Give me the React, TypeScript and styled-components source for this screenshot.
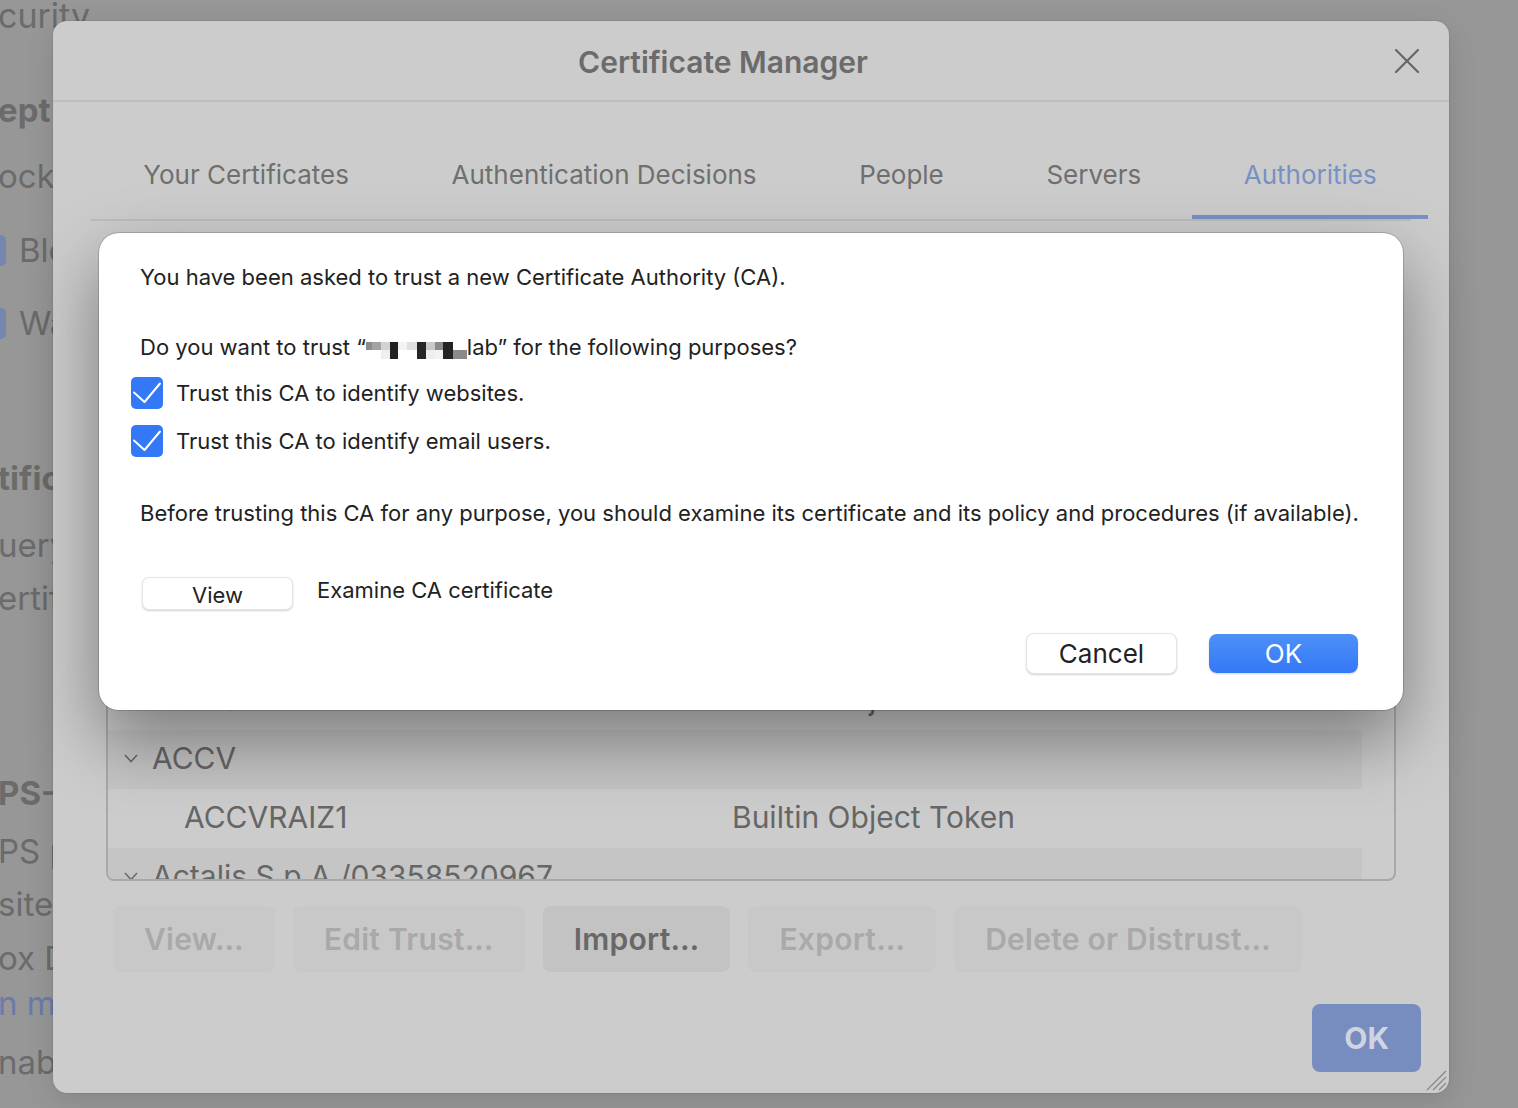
import React from "react";
import styled, { createGlobalStyle } from "styled-components";

const GlobalStyle = createGlobalStyle`
  html, body {
    margin: 0;
    padding: 0;
  }
  body {
    background: #979797;
    overflow: hidden;
    font-family: Inter, "Noto Sans", "Liberation Sans", sans-serif;
  }
`;

const mosaic: [number, number, number, number, string][] = [
  [0, 0, 6, 8, "#8c8c8c"],
  [6, 0, 9, 8, "#a3a3a3"],
  [15, 0, 9, 8, "#d2d2d2"],
  [15, 8, 9, 9, "#efefef"],
  [24, 0, 8, 17, "#222222"],
  [32, 0, 9, 8, "#f3f3f3"],
  [41, 0, 10, 8, "#e0e0e0"],
  [51, 0, 9, 17, "#262626"],
  [60, 0, 9, 8, "#c9c9c9"],
  [60, 8, 9, 9, "#eeeeee"],
  [69, 0, 8, 8, "#8a8a8a"],
  [69, 8, 8, 9, "#f2f2f2"],
  [77, 0, 10, 17, "#232323"],
  [87, 8, 14, 9, "#8a8a8a"],
];

const treeRows = [
  { group: true, name: "AC Camerfirma SA CIF A82743287" },
  { group: false, name: "Camerfirma Chambers of Commerce Root", device: "Builtin Object Token" },
  { group: false, name: "Camerfirma Global Chambersign Root", device: "Builtin Object Token" },
  { group: true, name: "AC Camerfirma S.A." },
  { group: false, name: "Global Chambersign Root - 2008", device: "Builtin Object Token" },
  { group: false, name: "Chambers of Commerce Root - 2008", device: "Builtin Object Token" },
  { group: true, name: "ACCV" },
  { group: false, name: "ACCVRAIZ1", device: "Builtin Object Token" },
  { group: true, name: "Actalis S.p.A./03358520967" },
  { group: false, name: "Actalis Authentication Root CA", device: "Builtin Object Token" },
];

const tabs = ["Your Certificates", "Authentication Decisions", "People", "Servers", "Authorities"];

function CheckIcon() {
  return (
    <svg width="32" height="32" viewBox="0 0 32 32">
      <path d="M3 15.5 L13.5 25 L29 6.5" fill="none" stroke="#fff" strokeWidth="2" strokeLinecap="round" strokeLinejoin="round" />
    </svg>
  );
}

function Chevron() {
  return (
    <svg width="14" height="9" viewBox="0 0 14 9">
      <polyline points="1,1 7,7.5 13,1" fill="none" stroke="#6a6a6a" strokeWidth="1.6" />
    </svg>
  );
}

function App() {
  return (
    <Page>
      <GlobalStyle />
      <SettingsColumn>
        <Frag $top={-5} $size={34}>curity</Frag>
        <Frag $top={55} $bold>ept</Frag>
        <Frag $top={26}>ock</Frag>
        <Frag $top={34}>
          <GhostBox />
          Blo
        </Frag>
        <Frag $top={33}>
          <GhostBox />
          War
        </Frag>
        <Frag $top={115} $bold>tifica</Frag>
        <Frag $top={27}>uery</Frag>
        <Frag $top={13}>ertific</Frag>
        <Frag $top={155} $bold>PS-O</Frag>
        <Frag $top={18}>PS pr</Frag>
        <Frag $top={13}>sites</Frag>
        <Frag $top={14}>ox Do</Frag>
        <Frag $top={5} $link>n mor</Frag>
        <Frag $top={19}>nable</Frag>
      </SettingsColumn>

      <Overlay>
        <Manager>
          <Header>
            <Title>Certificate Manager</Title>
            <CloseButton>
              <svg width="24" height="24" viewBox="0 0 24 24">
                <path d="M1 1 L23 23 M23 1 L1 23" stroke="#666" strokeWidth="2.2" strokeLinecap="round" />
              </svg>
            </CloseButton>
          </Header>

          <TabList>
            {tabs.map(t => (
              <Tab key={t} $active={t === "Authorities"}>
                {t}
              </Tab>
            ))}
          </TabList>

          <Description>You have certificates on file that identify these certificate authorities</Description>

          <Tree>
            <TreeRow $head>
              <Cell $indent={16}>Certificate Name</Cell>
              <Cell $indent={0}>Security Device</Cell>
            </TreeRow>
            {treeRows.map(r => (
              <TreeRow key={r.name} $group={r.group}>
                <Cell $indent={r.group ? 16 : 76}>
                  {r.group && <Chevron />}
                  {r.name}
                </Cell>
                <Cell $indent={0}>{r.device}</Cell>
              </TreeRow>
            ))}
          </Tree>

          <ButtonRow>
            <ActionButton>View…</ActionButton>
            <ActionButton>Edit Trust…</ActionButton>
            <ActionButton $enabled>Import…</ActionButton>
            <ActionButton>Export…</ActionButton>
            <ActionButton>Delete or Distrust…</ActionButton>
          </ButtonRow>

          <Footer>
            <FooterOk>OK</FooterOk>
          </Footer>

          <Grip>
            <svg width="24" height="24" viewBox="0 0 24 24">
              <path d="M23 4 L4 23 M23 10 L10 23 M23 16 L16 23" stroke="#8a8a8a" strokeWidth="1.4" />
            </svg>
          </Grip>

          <Dialog>
            <Para $top={0}>You have been asked to trust a new Certificate Authority (CA).</Para>
            <Para $top={42}>
              Do you want to trust “
              <Redacted width="101" height="17" viewBox="0 0 101 17">
                {mosaic.map(([x, y, w, h, c], i) => (
                  <rect key={i} x={x} y={y} width={w} height={h} fill={c} />
                ))}
              </Redacted>
              lab” for the following purposes?
            </Para>
            <CheckRow>
              <CheckBox>
                <CheckIcon />
              </CheckBox>
              Trust this CA to identify websites.
            </CheckRow>
            <CheckRow>
              <CheckBox>
                <CheckIcon />
              </CheckBox>
              Trust this CA to identify email users.
            </CheckRow>
            <Para $top={42}>
              Before trusting this CA for any purpose, you should examine its certificate and its policy and procedures (if
              available).
            </Para>
            <ViewRow>
              <SmallButton>View</SmallButton>
              <ViewLabel>Examine CA certificate</ViewLabel>
            </ViewRow>
            <Actions>
              <DialogButton>Cancel</DialogButton>
              <DialogButton $primary>OK</DialogButton>
            </Actions>
          </Dialog>
        </Manager>
      </Overlay>
    </Page>
  );
}

const Page = styled.div`
  position: relative;
  width: 1518px;
  height: 1108px;
  overflow: hidden;
  background: #979797;
`;

const SettingsColumn = styled.div`
  display: flex;
  flex-direction: column;
  align-items: flex-start;
  margin-left: -2px;
  color: #6b6b6b;
`;

const Frag = styled.div<{ $top: number; $bold?: boolean; $link?: boolean; $size?: number }>`
  display: flex;
  align-items: center;
  gap: 13px;
  height: 40px;
  margin-top: ${p => p.$top}px;
  font-size: ${p => p.$size ?? 33}px;
  font-weight: ${p => (p.$bold ? 700 : 400)};
  color: ${p => (p.$link ? "#6a7aab" : "#6b6b6b")};
  white-space: nowrap;
`;

const GhostBox = styled.span`
  width: 26px;
  height: 31px;
  margin-left: -18px;
  border-radius: 5px;
  background: #7587ae;
`;

const Overlay = styled.div`
  position: absolute;
  inset: 0;
  padding: 21px 0 0 53px;
`;

const Manager = styled.div`
  position: relative;
  width: 1396px;
  height: 1072px;
  box-sizing: border-box;
  display: flex;
  flex-direction: column;
  background: #cccccc;
  border-radius: 14px;
  box-shadow: 0 0 0 1px rgba(0, 0, 0, 0.06), 0 8px 30px rgba(0, 0, 0, 0.12);
`;

const Header = styled.div`
  position: relative;
  flex: none;
  height: 79px;
  padding-right: 56px;
  display: flex;
  align-items: center;
  justify-content: center;
  border-bottom: 2px solid #bdbdbd;
`;

const Title = styled.h1`
  margin: 3px 0 0;
  font-size: 30px;
  font-weight: 600;
  color: #6b6b6b;
`;

const CloseButton = styled.div`
  position: absolute;
  top: 28px;
  right: 30px;
  display: flex;
`;

const TabList = styled.div`
  flex: none;
  display: flex;
  height: 117px;
  margin: 0 38px;
  padding-left: 1px;
  border-bottom: 2px solid #bdbdbd;
`;

const Tab = styled.div<{ $active?: boolean }>`
  flex: none;
  box-sizing: border-box;
  height: 100%;
  display: flex;
  align-items: flex-end;
  padding: 0 51.3px 25px;
  font-size: 26px;
  line-height: 30px;
  color: ${p => (p.$active ? "#7891c4" : "#6f6f6f")};
  border-bottom: 4px solid ${p => (p.$active ? "#7891c4" : "transparent")};
`;

const Description = styled.p`
  margin: 28px 53px 0;
  font-size: 22px;
  line-height: 28px;
  color: #6b6b6b;
`;

const Tree = styled.div`
  flex: 1;
  min-height: 0;
  margin: 39px 53px 0;
  border: 2px solid #a8a8a8;
  border-radius: 8px;
  overflow: hidden;
  display: flex;
  flex-direction: column;
`;

const TreeRow = styled.div<{ $group?: boolean; $head?: boolean }>`
  flex: none;
  box-sizing: border-box;
  display: grid;
  grid-template-columns: 624px 1fr;
  align-items: center;
  height: ${p => (p.$head ? 58 : 59)}px;
  padding-bottom: 3px;
  margin-right: 32px;
  background: ${p => (p.$group ? "#c5c5c5" : "transparent")};
  font-size: 30px;
  color: #666666;
  white-space: nowrap;
`;

const Cell = styled.div<{ $indent: number }>`
  display: flex;
  align-items: center;
  gap: 14px;
  padding-left: ${p => p.$indent}px;
`;

const ButtonRow = styled.div`
  flex: none;
  display: flex;
  gap: 18px;
  margin-top: 25px;
  padding-left: 60px;
`;

const ActionButton = styled.button<{ $enabled?: boolean }>`
  height: 66px;
  padding: 0 31px;
  border: none;
  border-radius: 8px;
  background: ${p => (p.$enabled ? "#c3c3c3" : "#c8c8c8")};
  color: ${p => (p.$enabled ? "#686868" : "#a9a9a9")};
  font-family: inherit;
  font-size: 30px;
  font-weight: 600;
  letter-spacing: 0.25px;
`;

const Footer = styled.div`
  flex: none;
  display: flex;
  justify-content: flex-end;
  margin-top: 32px;
  padding: 0 28px 21px 0;
`;

const FooterOk = styled.button`
  height: 68px;
  padding: 0 32px;
  border: none;
  border-radius: 8px;
  background: #778dbf;
  color: #cfd4e0;
  font-family: inherit;
  font-size: 30px;
  font-weight: 700;
`;

const Grip = styled.div`
  position: absolute;
  right: 2px;
  bottom: 2px;
  display: flex;
`;

const Dialog = styled.div`
  position: absolute;
  left: 46px;
  top: 212px;
  width: 1304px;
  box-sizing: border-box;
  padding: 30px 0 36px;
  display: flex;
  flex-direction: column;
  background: #ffffff;
  border-radius: 20px;
  box-shadow: 0 0 0 1px rgba(0, 0, 0, 0.16), 0 30px 70px rgba(0, 0, 0, 0.4);
  color: #222222;
  font-size: 22px;
  line-height: 28px;
`;

const Para = styled.p<{ $top: number }>`
  margin: ${p => p.$top}px 0 0 41px;
  white-space: nowrap;
`;

const Redacted = styled.svg`
  vertical-align: -4px;
`;

const CheckRow = styled.label`
  display: flex;
  align-items: center;
  gap: 13px;
  height: 32px;
  margin-top: 16px;
  padding-left: 32px;
`;

const CheckBox = styled.span`
  width: 32px;
  height: 32px;
  display: flex;
  border-radius: 5px;
  background: #3478f6;
`;

const ViewRow = styled.div`
  display: flex;
  align-items: center;
  gap: 24px;
  margin-top: 50px;
  padding-left: 43px;
`;

const ViewLabel = styled.span`
  margin-top: -8px;
`;

const SmallButton = styled.button`
  width: 151px;
  height: 33px;
  border: 1px solid rgba(0, 0, 0, 0.1);
  border-radius: 7px;
  background: #ffffff;
  box-shadow: 0 1px 2px rgba(0, 0, 0, 0.18);
  font-family: inherit;
  font-size: 22px;
  color: #222222;
  padding: 3px 0 0;
`;

const Actions = styled.div`
  display: flex;
  justify-content: flex-end;
  align-items: center;
  gap: 32px;
  margin-top: 23px;
  padding-right: 45px;
`;

const DialogButton = styled.button<{ $primary?: boolean }>`
  width: ${p => (p.$primary ? 149 : 151)}px;
  height: ${p => (p.$primary ? 39 : 41)}px;
  border-radius: 8px;
  border: ${p => (p.$primary ? "none" : "1px solid rgba(0, 0, 0, 0.1)")};
  background: ${p => (p.$primary ? "linear-gradient(#4d90f8, #3478f6)" : "#ffffff")};
  box-shadow: 0 1px 2px rgba(0, 0, 0, 0.18);
  color: ${p => (p.$primary ? "#ffffff" : "#222222")};
  font-family: inherit;
  font-size: 26px;
`;

export default App;
